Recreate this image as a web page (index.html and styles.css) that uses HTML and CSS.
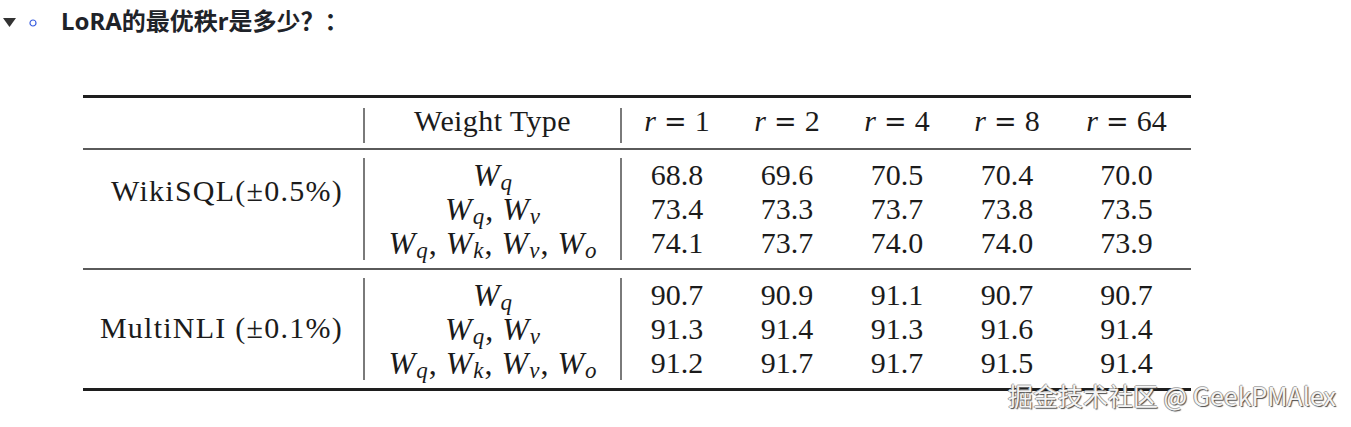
FILE: index.html
```html
<!DOCTYPE html>
<html>
<head>
	<title>LoRA rank</title>
	<meta name="viewport" content="width=device-width, initial-scale=1.0">
	<link rel="stylesheet" href="styles.css">
</head>
<body>
	<div class="item">
		<svg class="caret" width="13" height="9" viewBox="0 0 13 9"><path d="M0 0H13L6.5 9Z" fill="#333"/></svg>
		<svg class="ring" width="8" height="8" viewBox="0 0 8 8"><circle cx="4" cy="4" r="3" fill="none" stroke="#3b5fe0" stroke-width="1.2"/></svg>
		<span class="title">LoRA的最优秩r是多少？：</span>
	</div>

	<div class="table">
		<div class="band head">
			<div class="cell label"></div>
			<div class="cell type-head">Weight Type</div>
			<div class="cell"><i>r</i><span class="eq">=</span>1</div>
			<div class="cell"><i>r</i><span class="eq">=</span>2</div>
			<div class="cell"><i>r</i><span class="eq">=</span>4</div>
			<div class="cell"><i>r</i><span class="eq">=</span>8</div>
			<div class="cell"><i>r</i><span class="eq">=</span>64</div>
		</div>

		<div class="band group">
			<div class="cell label label-wiki">WikiSQL(±0.5%)</div>
			<div class="cell type">
				<div><i>W</i><sub>q</sub></div>
				<div><i>W</i><sub>q</sub><span class="comma">,</span><i>W</i><sub>v</sub></div>
				<div><i>W</i><sub>q</sub><span class="comma">,</span><i>W</i><sub>k</sub><span class="comma">,</span><i>W</i><sub>v</sub><span class="comma">,</span><i>W</i><sub>o</sub></div>
			</div>
			<div class="cell"><div>68.8</div><div>73.4</div><div>74.1</div></div>
			<div class="cell"><div>69.6</div><div>73.3</div><div>73.7</div></div>
			<div class="cell"><div>70.5</div><div>73.7</div><div>74.0</div></div>
			<div class="cell"><div>70.4</div><div>73.8</div><div>74.0</div></div>
			<div class="cell"><div>70.0</div><div>73.5</div><div>73.9</div></div>
		</div>

		<div class="band group">
			<div class="cell label label-nli">MultiNLI (±0.1%)</div>
			<div class="cell type">
				<div><i>W</i><sub>q</sub></div>
				<div><i>W</i><sub>q</sub><span class="comma">,</span><i>W</i><sub>v</sub></div>
				<div><i>W</i><sub>q</sub><span class="comma">,</span><i>W</i><sub>k</sub><span class="comma">,</span><i>W</i><sub>v</sub><span class="comma">,</span><i>W</i><sub>o</sub></div>
			</div>
			<div class="cell"><div>90.7</div><div>91.3</div><div>91.2</div></div>
			<div class="cell"><div>90.9</div><div>91.4</div><div>91.7</div></div>
			<div class="cell"><div>91.1</div><div>91.3</div><div>91.7</div></div>
			<div class="cell"><div>90.7</div><div>91.6</div><div>91.5</div></div>
			<div class="cell"><div>90.7</div><div>91.4</div><div>91.4</div></div>
		</div>
	</div>

	<div class="watermark">掘金技术社区 @ GeekPMAlex</div>
</body>
</html>
```

FILE: styles.css
```css
body {
	margin: 0;
	background-color: #fff;
	font-family: 'Noto Sans', 'Noto Sans CJK SC', sans-serif;
	color: #252933;
}

.item {
	display: flex;
	align-items: center;
	height: 36px;
	padding-top: 3px;
}

.caret {
	margin-left: 3px;
	margin-top: 3px;
}

.ring {
	margin-left: 13px;
	margin-top: 3px;
}

.title {
	margin-left: 24px;
	font-size: 24px;
	font-weight: 700;
	line-height: 36px;
	color: #1f2329;
}

.table {
	margin: 56px 0 0 83px;
	width: 1108px;
	border-top: 3px solid #1e1e1e;
	border-bottom: 3px solid #1e1e1e;
	font-family: 'Liberation Serif', serif;
	font-size: 30px;
	color: #1b1b1b;
}

.band {
	display: grid;
	grid-template-columns: 280px 259px repeat(4, 110px) 1fr;
}

.head {
	padding: 10px 0 5px;
	border-bottom: 2px solid #5a5a5a;
}

.head .cell {
	line-height: 26px;
	padding-bottom: 8px;
}

.group {
	padding: 8px 0;
	line-height: 34px;
}

.group + .group {
	border-top: 2px solid #5a5a5a;
}

.cell {
	text-align: center;
	white-space: nowrap;
}

.label {
	text-align: right;
	padding-right: 20px;
	letter-spacing: 1.25px;
}

.label-wiki {
	padding-top: 16px;
}

.label-nli {
	padding-top: 33px;
}

.type,
.type-head {
	border-left: 2px solid #7a7a7a;
	border-right: 2px solid #7a7a7a;
}

.type-head {
	letter-spacing: 0.4px;
}

.type {
	font-size: 32px;
	line-height: 34px;
}

.cell i {
	font-style: italic;
}

.eq {
	margin: 0 8px;
	font-family: 'DejaVu Serif', serif;
	font-size: 27px;
}

sub {
	font-style: italic;
	font-size: 23px;
	vertical-align: -4px;
	line-height: 0;
	margin-left: 1px;
}

.comma {
	margin: 0 9px 0 1px;
}

.watermark {
	position: absolute;
	top: 377px;
	right: 15px;
	font-family: 'Noto Sans CJK SC', sans-serif;
	font-size: 25px;
	line-height: 36px;
	color: #f4f4f4;
	text-shadow: 1px 1px 1px #4a4a4a, -1px 0 0 #9a9a9a, 0 -1px 0 #b0b0b0;
}
```
